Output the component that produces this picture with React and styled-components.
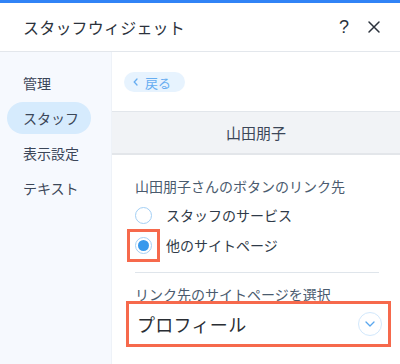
import React, { useState } from "react";
import styled, { createGlobalStyle } from "styled-components";

const GlobalStyle = createGlobalStyle`
  html, body {
    margin: 0;
    padding: 0;
    background: #ffffff;
  }
  body {
    font-family: "Noto Sans CJK JP", "Noto Sans", "Liberation Sans", sans-serif;
  }
`;

const Panel = styled.div`
  width: 400px;
  height: 364px;
  overflow: hidden;
  display: flex;
  flex-direction: column;
  background: #ffffff;
`;

const TopLine = styled.div`
  height: 3px;
  background: #3183f6;
  flex-shrink: 0;
`;

const Header = styled.header`
  box-sizing: border-box;
  height: 49px;
  display: flex;
  align-items: center;
  padding: 0 14px 0 23px;
  border-bottom: 1px solid #e3e7ec;
  flex-shrink: 0;
`;

const Title = styled.h1`
  flex: 1;
  margin: 0;
  font-size: 16px;
  font-weight: 400;
  color: #2b323c;
  letter-spacing: 0.2px;
`;

const HeaderButton = styled.button`
  border: none;
  background: none;
  padding: 0;
  width: 24px;
  height: 24px;
  display: flex;
  align-items: center;
  justify-content: center;
  font-family: "Liberation Sans", sans-serif;
  font-size: 18px;
  color: #2b323c;
  margin-left: ${(p) => p.gap || 0}px;
`;

const Body = styled.div`
  flex: 1;
  display: flex;
  min-height: 0;
`;

const Sidebar = styled.nav`
  width: 111px;
  flex-shrink: 0;
  background: #f6f9fe;
  border-right: 1px solid #eef2f8;
  padding-top: 15px;
  display: flex;
  flex-direction: column;
  gap: 3px;
`;

const NavItem = styled.div`
  box-sizing: border-box;
  height: 32px;
  width: 84px;
  margin-left: 7px;
  padding-left: 16px;
  display: flex;
  align-items: center;
  border-radius: 16px;
  font-size: 14px;
  color: #3b4658;
  background: ${(p) => (p.active ? "#d6ebfd" : "transparent")};
`;

const Main = styled.main`
  flex: 1;
  display: flex;
  flex-direction: column;
  min-width: 0;
`;

const BackBar = styled.div`
  padding: 20px 0 19px 12px;
`;

const BackButton = styled.button`
  box-sizing: border-box;
  height: 20px;
  width: 61px;
  border: none;
  border-radius: 10px;
  background: #e7f3fe;
  color: #66adf1;
  font-family: inherit;
  font-size: 13px;
  display: flex;
  align-items: center;
  gap: 7px;
  padding: 0 0 0 9px;
`;

const Band = styled.div`
  box-sizing: border-box;
  height: 44px;
  background: #f1f3f6;
  border-top: 1px solid #e2e6eb;
  border-bottom: 2px solid #e3e6ea;
  display: flex;
  align-items: center;
  justify-content: center;
  font-size: 15px;
  color: #3b4658;
`;

const Content = styled.section`
  padding: 21px 21px 0 23px;
  display: flex;
  flex-direction: column;
`;

const Label = styled.div`
  font-size: 14px;
  line-height: 20px;
  color: #4a5b6e;
`;

const RadioList = styled.div`
  margin-top: 4px;
  display: flex;
  flex-direction: column;
`;

const RadioRow = styled.label`
  height: 30px;
  display: flex;
  align-items: center;
  gap: 14px;
  font-size: 14px;
  color: #2f3a48;
  cursor: pointer;
`;

/* square annotation frame around a radio */
const RadioFrame = styled.span`
  display: flex;
  flex-shrink: 0;
  outline: ${(p) => (p.highlighted ? "3px solid #f6694c" : "none")};
  outline-offset: 5px;
`;

const RadioCircle = styled.span`
  box-sizing: border-box;
  width: 17px;
  height: 17px;
  border-radius: 50%;
  border: 1px solid #a3cff5;
  background: #ffffff;
  display: flex;
  align-items: center;
  justify-content: center;

  &::after {
    content: "";
    width: 11px;
    height: 11px;
    border-radius: 50%;
    background: ${(p) => (p.checked ? "#3899ec" : "transparent")};
  }
`;

const Divider = styled.hr`
  margin: 12px 0 0;
  border: none;
  border-top: 1px solid #dfe5eb;
`;

const SecondLabel = styled(Label)`
  margin-top: 11px;
`;

const Dropdown = styled.div`
  margin: 6px -3px 0 0;
  height: 28px;
  display: flex;
  align-items: center;
  justify-content: space-between;
  padding-left: 2px;
  outline: ${(p) => (p.highlighted ? "3px solid #f6694c" : "none")};
  outline-offset: 6px;
`;

const DropdownValue = styled.span`
  font-size: 18px;
  color: #2a2e34;
  letter-spacing: 0.3px;
`;

const ChevronCircle = styled.span`
  box-sizing: border-box;
  width: 24px;
  height: 24px;
  border-radius: 50%;
  border: 1px solid #d2e8fc;
  display: flex;
  align-items: center;
  justify-content: center;
`;

const options = [
  { id: "service", label: "スタッフのサービス" },
  { id: "page", label: "他のサイトページ" },
];

export default function App() {
  const [selected, setSelected] = useState("page");

  return (
    <>
      <GlobalStyle />
      <Panel>
        <TopLine />
        <Header>
          <Title>スタッフウィジェット</Title>
          <HeaderButton>?</HeaderButton>
          <HeaderButton gap={6}>
            <svg width="14" height="14" viewBox="0 0 14 14">
              <path
                d="M2 2 L12 12 M12 2 L2 12"
                stroke="#2b323c"
                strokeWidth="1.5"
                strokeLinecap="round"
              />
            </svg>
          </HeaderButton>
        </Header>
        <Body>
          <Sidebar>
            <NavItem>管理</NavItem>
            <NavItem active>スタッフ</NavItem>
            <NavItem>表示設定</NavItem>
            <NavItem>テキスト</NavItem>
          </Sidebar>
          <Main>
            <BackBar>
              <BackButton>
                <svg width="5" height="8" viewBox="0 0 5 8">
                  <path
                    d="M4 1 L1.2 4 L4 7"
                    fill="none"
                    stroke="#66adf1"
                    strokeWidth="1.3"
                    strokeLinecap="round"
                  />
                </svg>
                戻る
              </BackButton>
            </BackBar>
            <Band>山田朋子</Band>
            <Content>
              <Label>山田朋子さんのボタンのリンク先</Label>
              <RadioList>
                {options.map((o) => (
                  <RadioRow key={o.id} onClick={() => setSelected(o.id)}>
                    <RadioFrame highlighted={o.id === "page"}>
                      <RadioCircle checked={selected === o.id} />
                    </RadioFrame>
                    {o.label}
                  </RadioRow>
                ))}
              </RadioList>
              <Divider />
              <SecondLabel>リンク先のサイトページを選択</SecondLabel>
              <Dropdown highlighted>
                <DropdownValue>プロフィール</DropdownValue>
                <ChevronCircle>
                  <svg width="10" height="6" viewBox="0 0 10 6">
                    <path
                      d="M1 1 L5 5 L9 1"
                      fill="none"
                      stroke="#5aa7ee"
                      strokeWidth="1.3"
                      strokeLinecap="round"
                      strokeLinejoin="round"
                    />
                  </svg>
                </ChevronCircle>
              </Dropdown>
            </Content>
          </Main>
        </Body>
      </Panel>
    </>
  );
}
